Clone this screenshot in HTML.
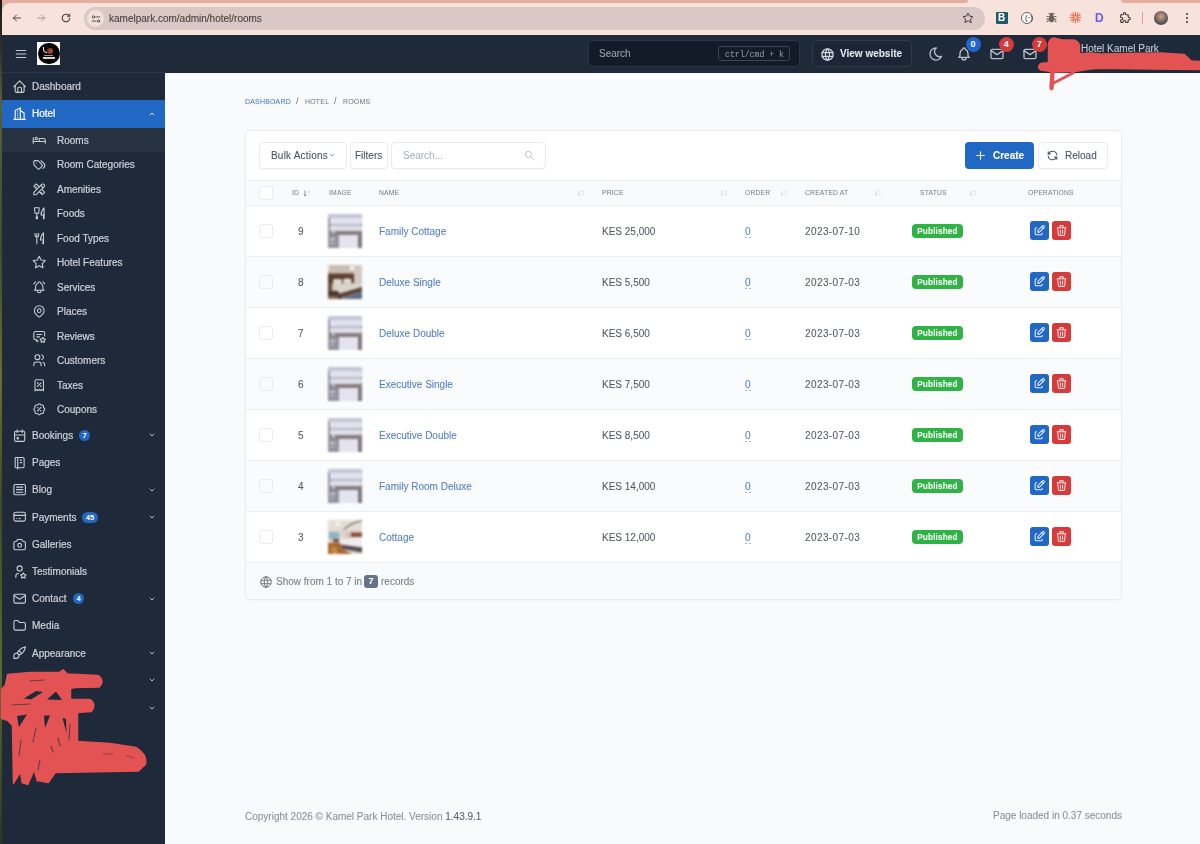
<!DOCTYPE html><html><head><meta charset="utf-8"><title>Rooms</title><style>
*{box-sizing:border-box;margin:0;padding:0}
html,body{width:1200px;height:844px;overflow:hidden}
body{position:relative;background:#f9fafc;font-family:"Liberation Sans",sans-serif;font-size:10px;color:#1d273b}
.abs{position:absolute}
.t{white-space:nowrap;-webkit-text-stroke:.08px currentColor;will-change:transform}
.sb{-webkit-text-stroke:.22px currentColor}
svg.i{position:absolute;fill:none;stroke:currentColor;stroke-linecap:round;stroke-linejoin:round;overflow:visible}
</style></head><body>
<div class="abs" style="left:0;top:0;width:2px;height:844px;background:linear-gradient(#1e1e1a 0,#30302a 6%,#56603a 12%,#3f4d2c 30%,#6a6d35 45%,#3d4a25 60%,#5a6a30 80%,#2c3520 100%)"></div>
<div class="abs" style="left:2px;top:0;width:1198px;height:35px;background:#f7e3dc"></div>
<div class="abs" style="left:2px;top:0;width:965.5px;height:2.8px;background:#e6ae9e;border-radius:0 0 3px 0"></div>
<div class="abs" style="left:1121px;top:0;width:79px;height:2.8px;background:#e6ae9e;border-radius:0 0 0 3px"></div>
<div class="abs" style="left:2px;top:2.5px;width:8px;height:8px;background:radial-gradient(circle at 8px 8px,#f7e3dc 7.5px,#e6ae9e 8px)"></div>
<div class="abs" style="left:84px;top:7px;width:901px;height:22.5px;border-radius:11.25px;background:#d9c8c5"></div>
<div class="abs" style="left:87px;top:10px;width:17px;height:17px;border-radius:50%;background:#f2e1db"></div>

<svg class="i" style="left:11px;top:12px;width:12px;height:12px;color:#4a3f3c;stroke-width:1.9" viewBox="0 0 24 24"><path d="M5 12h14"/><path d="M5 12l6 6"/><path d="M5 12l6 -6"/></svg>
<svg class="i" style="left:35px;top:12px;width:12px;height:12px;color:#a8958f;stroke-width:1.9" viewBox="0 0 24 24"><path d="M5 12h14"/><path d="M13 18l6 -6"/><path d="M13 6l6 6"/></svg>
<svg class="i" style="left:60px;top:12px;width:12px;height:12px;color:#4a3f3c;stroke-width:2.1" viewBox="0 0 24 24"><path d="M19.5 12a7.5 7.5 0 1 1 -2.2 -5.3"/><path d="M19.5 4v4.5h-4.5"/></svg>
<svg class="i" style="left:91px;top:13.5px;width:10px;height:10px;color:#4a3f3c;stroke-width:2.1" viewBox="0 0 24 24"><circle cx="6" cy="7" r="2.8"/><path d="M12 7h9"/><circle cx="18" cy="17" r="2.8"/><path d="M3 17h9"/></svg>
<div class="abs t" style="left:109.3px;top:13.40px;height:12.0px;line-height:12.0px;font-size:10px;font-weight:400;color:#4b3d39;">kamelpark.com/admin/hotel/rooms</div>
<svg class="i" style="left:962px;top:12px;width:12px;height:12px;color:#4a3f3c;stroke-width:2" viewBox="0 0 24 24"><path d="M12 17.75l-6.172 3.245l1.179 -6.873l-5 -4.867l6.9 -1l3.086 -6.253l3.086 6.253l6.9 1l-5 4.867l1.179 6.873z"/></svg>
<div class="abs" style="left:996px;top:12px;width:12px;height:12px;background:#1d5a6a;border-radius:1px"></div>
<div class="abs t" style="left:998px;top:12px;font-size:10px;line-height:12px;font-weight:700;color:#fff">B</div>
<div class="abs" style="left:1021px;top:12px;width:12px;height:12px;border-radius:50%;border:1.3px solid #6a5d59;background:#fff"></div>
<div class="abs t" style="left:1024.5px;top:11.5px;font-size:8px;line-height:12px;color:#4a3f3c">(·)</div>
<svg class="abs" style="left:1045px;top:11px;width:13px;height:13px" viewBox="0 0 24 24"><ellipse cx="12" cy="14" rx="5" ry="7" fill="#6b615d"/><circle cx="12" cy="6" r="3" fill="#6b615d"/><path d="M3 10h4M3 15h4M3 20l4 -2M21 10h-4M21 15h-4M21 20l-4 -2M7 4l2 2M17 4l-2 2" stroke="#6b615d" stroke-width="2"/></svg>
<svg class="abs" style="left:1069px;top:11px;width:13px;height:13px" viewBox="0 0 24 24"><g stroke="#e8603f" stroke-width="1.6" stroke-linecap="round"><path d="M12 2v7M12 15v7M2 12h7M15 12h7M5 5l5 5M14 14l5 5M19 5l-5 5M10 14l-5 5M7.5 3l2.5 6M14 15l2.5 6M3 7.5l6 2.5M15 14l6 2.5M16.5 3l-2.5 6M10 15l-2.5 6M21 7.5l-6 2.5M9 14l-6 2.5"/></g></svg>
<div class="abs t" style="left:1095px;top:11px;font-size:12px;line-height:14px;font-weight:700;color:#6f5ee8">D</div>
<svg class="i" style="left:1119px;top:11px;width:13px;height:13px;color:#3f3533;stroke-width:2" viewBox="0 0 24 24"><path d="M4 7h3a1 1 0 0 0 1 -1v-1a2 2 0 0 1 4 0v1a1 1 0 0 0 1 1h3a1 1 0 0 1 1 1v3a1 1 0 0 0 1 1h1a2 2 0 0 1 0 4h-1a1 1 0 0 0 -1 1v3a1 1 0 0 1 -1 1h-3a1 1 0 0 1 -1 -1v-1a2 2 0 0 0 -4 0v1a1 1 0 0 1 -1 1h-3a1 1 0 0 1 -1 -1v-3a1 1 0 0 1 1 -1h1a2 2 0 0 0 0 -4h-1a1 1 0 0 1 -1 -1v-3a1 1 0 0 1 1 -1"/></svg>
<div class="abs" style="left:1142px;top:12px;width:1px;height:12px;background:#e0a090"></div>
<div class="abs" style="left:1154px;top:11px;width:14px;height:14px;border-radius:50%;background:radial-gradient(circle at 50% 40%,#c9a58f 0,#9a7763 35%,#3d4a5a 70%,#6a7888 100%)"></div>
<div class="abs" style="left:1186px;top:13px;width:2px;height:2px;border-radius:50%;background:#3f3533;box-shadow:0 4px 0 #3f3533,0 8px 0 #3f3533"></div>
<div class="abs" style="left:2px;top:35px;width:1198px;height:37.5px;background:#1e2939"></div>
<svg class="i" style="left:14px;top:46.5px;width:14px;height:14px;color:#c5cad2;stroke-width:2" viewBox="0 0 24 24"><path d="M4 6l16 0"/><path d="M4 12l16 0"/><path d="M4 18l16 0"/></svg>
<div class="abs" style="left:37px;top:42.3px;width:23px;height:22.7px;background:#fff;overflow:hidden"><div class="abs" style="left:1px;top:0.7px;width:21.5px;height:21.5px;border-radius:50%;background:#050505"></div><div class="abs" style="left:9.5px;top:5.5px;width:6px;height:6.5px;border-radius:2.5px;background:radial-gradient(circle at 60% 55%,#c04a30 0,#7a3a24 60%,#3a2018 100%)"></div><div class="abs" style="left:6.2px;top:5.2px;width:4px;height:6px;border-left:1.6px solid #f2f2f2;border-bottom:1.4px solid #e8e8e8;border-radius:0 0 0 4px"></div><div class="abs" style="left:7px;top:12.5px;width:9px;height:.8px;background:#9a9a9a"></div><div class="abs" style="left:5.5px;top:15px;width:12px;height:2px;background:#d8d8d8"></div></div>
<div class="abs" style="left:588px;top:40px;width:212px;height:27px;background:#141b28;border:1px solid #2a3546;border-radius:4px"></div>
<div class="abs t" style="left:599px;top:48.20px;height:12.0px;line-height:12.0px;font-size:10px;font-weight:400;color:#9aa3ae;">Search</div>
<div class="abs" style="left:718px;top:46px;width:72px;height:15px;border:1px solid #3a4556;border-radius:3px"></div>
<div class="abs t" style="left:724.5px;top:46.5px;height:15px;line-height:15px;font-family:'Liberation Mono',monospace;font-size:8.2px;color:#8a939f">ctrl/cmd + k</div>
<div class="abs" style="left:812px;top:40px;width:100px;height:27px;border:1px solid #2f3a4b;border-radius:4px;background:#1c2636"></div>
<svg class="i" style="left:820px;top:46.5px;width:15px;height:15px;color:#d6dae0;stroke-width:2" viewBox="0 0 24 24"><path d="M3 12a9 9 0 1 0 18 0a9 9 0 0 0 -18 0"/><path d="M3.6 9h16.8"/><path d="M3.6 15h16.8"/><path d="M11.5 3a17 17 0 0 0 0 18"/><path d="M12.5 3a17 17 0 0 1 0 18"/></svg>
<div class="abs t" style="left:839.5px;top:48.40px;height:12.0px;line-height:12.0px;font-size:10px;font-weight:700;color:#e3e6ea;">View website</div>
<svg class="i" style="left:927.5px;top:45.5px;width:16px;height:16px;color:#b9bfc8;stroke-width:2" viewBox="0 0 24 24"><path d="M12 3c.132 0 .263 0 .393 0a7.5 7.5 0 0 0 7.92 12.446a9 9 0 1 1 -8.313 -12.454z"/></svg>
<svg class="i" style="left:955.5px;top:45.5px;width:16px;height:16px;color:#b9bfc8;stroke-width:2" viewBox="0 0 24 24"><path d="M10 5a2 2 0 1 1 4 0a7 7 0 0 1 4 6v3a4 4 0 0 0 2 3h-16a4 4 0 0 0 2 -3v-3a7 7 0 0 1 4 -6"/><path d="M9 17v1a3 3 0 0 0 6 0v-1"/></svg>
<svg class="i" style="left:988.5px;top:45.5px;width:16px;height:16px;color:#b9bfc8;stroke-width:2" viewBox="0 0 24 24"><path d="M3 7a2 2 0 0 1 2 -2h14a2 2 0 0 1 2 2v10a2 2 0 0 1 -2 2h-14a2 2 0 0 1 -2 -2v-10z"/><path d="M3 7l9 6l9 -6"/></svg>
<svg class="i" style="left:1021.5px;top:45.5px;width:16px;height:16px;color:#b9bfc8;stroke-width:2" viewBox="0 0 24 24"><path d="M3 7a2 2 0 0 1 2 -2h14a2 2 0 0 1 2 2v10a2 2 0 0 1 -2 2h-14a2 2 0 0 1 -2 -2v-10z"/><path d="M3 7l9 6l9 -6"/></svg>
<div class="abs" style="left:965.5px;top:36.7px;width:15px;height:15px;border-radius:50%;background:#2266cc;color:#fff;font-size:9px;font-weight:700;line-height:15px;text-align:center">0</div>
<div class="abs" style="left:998.7px;top:36.7px;width:15px;height:15px;border-radius:50%;background:#d63b3b;color:#fff;font-size:9px;font-weight:700;line-height:15px;text-align:center">4</div>
<div class="abs" style="left:1031.7px;top:36.7px;width:15px;height:15px;border-radius:50%;background:#d63b3b;color:#fff;font-size:9px;font-weight:700;line-height:15px;text-align:center">7</div>
<div class="abs t" style="left:1081px;top:43.20px;height:12.0px;line-height:12.0px;font-size:10px;font-weight:400;color:#c6cbd3;">Hotel Kamel Park</div>
<div class="abs" style="left:2px;top:72px;width:163px;height:772px;background:#1e2939"></div>
<div class="abs" style="left:2px;top:72px;width:163px;height:1px;background:#2b3647"></div>
<div class="abs" style="left:2px;top:100px;width:163px;height:28px;background:#2168c4"></div>
<div class="abs" style="left:2px;top:128px;width:163px;height:24px;background:#263141"></div>
<svg class="i" style="left:12px;top:79.0px;width:15.3px;height:15.3px;color:#cbd0d7;stroke-width:1.7" viewBox="0 0 24 24"><path d="M5 12l-2 0l9 -9l9 9l-2 0"/><path d="M5 12v7a2 2 0 0 0 2 2h10a2 2 0 0 0 2 -2v-7"/><path d="M9 21v-6a2 2 0 0 1 2 -2h2a2 2 0 0 1 2 2v6"/></svg><div class="abs t" style="left:32px;top:81.20px;height:12.0px;line-height:12.0px;font-size:10px;font-weight:400;color:#cbd0d7;-webkit-text-stroke:.22px currentColor">Dashboard</div>
<svg class="i" style="left:12px;top:106.2px;width:15.3px;height:15.3px;color:#ffffff;stroke-width:1.7" viewBox="0 0 24 24"><path d="M3 21l18 0"/><path d="M5 21v-14l8 -4v18"/><path d="M19 21v-10l-6 -4"/><path d="M9 9l0 .01"/><path d="M9 12l0 .01"/><path d="M9 15l0 .01"/><path d="M9 18l0 .01"/></svg><div class="abs t" style="left:32px;top:108.40px;height:12.0px;line-height:12.0px;font-size:10px;font-weight:400;color:#ffffff;-webkit-text-stroke:.22px currentColor">Hotel</div><svg class="i" style="left:148px;top:109.8px;width:8px;height:8px;color:#ffffff;stroke-width:2.6" viewBox="0 0 24 24"><path d="M6 15l6 -6l6 6"/></svg>
<svg class="i" style="left:32px;top:132.75px;width:14.5px;height:14.5px;color:#cbd0d7;stroke-width:1.75" viewBox="0 0 24 24"><path d="M7 9m-2 0a2 2 0 1 0 4 0a2 2 0 1 0 -4 0"/><path d="M22 17v-3h-20"/><path d="M2 8v9"/><path d="M12 14h10v-2a3 3 0 0 0 -3 -3h-7v5z"/></svg>
<div class="abs t" style="left:56.5px;top:134.60px;height:12.0px;line-height:12.0px;font-size:10px;font-weight:400;color:#cbd0d7;-webkit-text-stroke:.22px currentColor">Rooms</div>
<svg class="i" style="left:32px;top:157.25px;width:14.5px;height:14.5px;color:#cbd0d7;stroke-width:1.75" viewBox="0 0 24 24"><path d="M3 8v4.172a2 2 0 0 0 .586 1.414l5.71 5.71a2.41 2.41 0 0 0 3.408 0l3.592 -3.592a2.41 2.41 0 0 0 0 -3.408l-5.71 -5.71a2 2 0 0 0 -1.414 -.586h-4.172a2 2 0 0 0 -2 2z"/><path d="M18 19l1.592 -1.592a4.82 4.82 0 0 0 0 -6.816l-4.592 -4.592"/><path d="M7 10h-.01"/></svg>
<div class="abs t" style="left:56.5px;top:159.10px;height:12.0px;line-height:12.0px;font-size:10px;font-weight:400;color:#cbd0d7;-webkit-text-stroke:.22px currentColor">Room Categories</div>
<svg class="i" style="left:32px;top:181.75px;width:14.5px;height:14.5px;color:#cbd0d7;stroke-width:1.75" viewBox="0 0 24 24"><path d="M3 21h4l13 -13a1.5 1.5 0 0 0 -4 -4l-13 13v4"/><path d="M14.5 5.5l4 4"/><path d="M12 8l-5 -5l-4 4l5 5"/><path d="M7 8l-1.5 1.5"/><path d="M16 12l5 5l-4 4l-5 -5"/><path d="M16 17l-1.5 1.5"/></svg>
<div class="abs t" style="left:56.5px;top:183.60px;height:12.0px;line-height:12.0px;font-size:10px;font-weight:400;color:#cbd0d7;-webkit-text-stroke:.22px currentColor">Amenities</div>
<svg class="i" style="left:32px;top:206.25px;width:14.5px;height:14.5px;color:#cbd0d7;stroke-width:1.75" viewBox="0 0 24 24"><path d="M4 3h8l-1 9h-6z"/><path d="M7 18h2v3h-2z"/><path d="M20 3v12h-5c-.023 -3.681 .184 -7.406 5 -12z"/><path d="M20 15v6h-1v-6"/><path d="M8 12l0 6"/></svg>
<div class="abs t" style="left:56.5px;top:208.10px;height:12.0px;line-height:12.0px;font-size:10px;font-weight:400;color:#cbd0d7;-webkit-text-stroke:.22px currentColor">Foods</div>
<svg class="i" style="left:32px;top:230.75px;width:14.5px;height:14.5px;color:#cbd0d7;stroke-width:1.75" viewBox="0 0 24 24"><path d="M19 3v12h-5c-.023 -3.681 .184 -7.406 5 -12zm0 12v6h-1v-3m-10 -14v17m-3 -17v3a3 3 0 1 0 6 0v-3"/></svg>
<div class="abs t" style="left:56.5px;top:232.60px;height:12.0px;line-height:12.0px;font-size:10px;font-weight:400;color:#cbd0d7;-webkit-text-stroke:.22px currentColor">Food Types</div>
<svg class="i" style="left:32px;top:255.25px;width:14.5px;height:14.5px;color:#cbd0d7;stroke-width:1.75" viewBox="0 0 24 24"><path d="M12 17.75l-6.172 3.245l1.179 -6.873l-5 -4.867l6.9 -1l3.086 -6.253l3.086 6.253l6.9 1l-5 4.867l1.179 6.873z"/></svg>
<div class="abs t" style="left:56.5px;top:257.10px;height:12.0px;line-height:12.0px;font-size:10px;font-weight:400;color:#cbd0d7;-webkit-text-stroke:.22px currentColor">Hotel Features</div>
<svg class="i" style="left:32px;top:279.75px;width:14.5px;height:14.5px;color:#cbd0d7;stroke-width:1.75" viewBox="0 0 24 24"><path d="M10 5a2 2 0 0 1 4 0a7 7 0 0 1 4 6v3a4 4 0 0 0 2 3h-16a4 4 0 0 0 2 -3v-3a7 7 0 0 1 4 -6"/><path d="M9 17v1a3 3 0 0 0 6 0v-1"/><path d="M21 6.727a11.05 11.05 0 0 0 -2.794 -3.727"/><path d="M3 6.727a11.06 11.06 0 0 1 2.792 -3.727"/></svg>
<div class="abs t" style="left:56.5px;top:281.60px;height:12.0px;line-height:12.0px;font-size:10px;font-weight:400;color:#cbd0d7;-webkit-text-stroke:.22px currentColor">Services</div>
<svg class="i" style="left:32px;top:304.25px;width:14.5px;height:14.5px;color:#cbd0d7;stroke-width:1.75" viewBox="0 0 24 24"><path d="M9 11a3 3 0 1 0 6 0a3 3 0 0 0 -6 0"/><path d="M17.657 16.657l-4.243 4.243a2 2 0 0 1 -2.827 0l-4.244 -4.243a8 8 0 1 1 11.314 0z"/></svg>
<div class="abs t" style="left:56.5px;top:306.10px;height:12.0px;line-height:12.0px;font-size:10px;font-weight:400;color:#cbd0d7;-webkit-text-stroke:.22px currentColor">Places</div>
<svg class="i" style="left:32px;top:328.75px;width:14.5px;height:14.5px;color:#cbd0d7;stroke-width:1.75" viewBox="0 0 24 24"><path d="M8 9h8"/><path d="M8 13h4.5"/><path d="M10.325 19.605l-2.325 1.395v-3h-2a3 3 0 0 1 -3 -3v-8a3 3 0 0 1 3 -3h12a3 3 0 0 1 3 3v4.5"/><path d="M17.8 20.817l-2.172 1.138a.392 .392 0 0 1 -.568 -.41l.415 -2.411l-1.757 -1.707a.389 .389 0 0 1 .217 -.665l2.428 -.352l1.086 -2.193a.392 .392 0 0 1 .702 0l1.086 2.193l2.428 .352a.39 .39 0 0 1 .217 .665l-1.757 1.707l.414 2.41a.39 .39 0 0 1 -.567 .411l-2.172 -1.138z"/></svg>
<div class="abs t" style="left:56.5px;top:330.60px;height:12.0px;line-height:12.0px;font-size:10px;font-weight:400;color:#cbd0d7;-webkit-text-stroke:.22px currentColor">Reviews</div>
<svg class="i" style="left:32px;top:353.25px;width:14.5px;height:14.5px;color:#cbd0d7;stroke-width:1.75" viewBox="0 0 24 24"><path d="M9 7m-4 0a4 4 0 1 0 8 0a4 4 0 1 0 -8 0"/><path d="M3 21v-2a4 4 0 0 1 4 -4h4a4 4 0 0 1 4 4v2"/><path d="M16 3.13a4 4 0 0 1 0 7.75"/><path d="M21 21v-2a4 4 0 0 0 -3 -3.85"/></svg>
<div class="abs t" style="left:56.5px;top:355.10px;height:12.0px;line-height:12.0px;font-size:10px;font-weight:400;color:#cbd0d7;-webkit-text-stroke:.22px currentColor">Customers</div>
<svg class="i" style="left:32px;top:377.75px;width:14.5px;height:14.5px;color:#cbd0d7;stroke-width:1.75" viewBox="0 0 24 24"><path d="M9 14l6 -6"/><circle cx="9.5" cy="8.5" r=".5"/><circle cx="14.5" cy="13.5" r=".5"/><path d="M5 21v-16a2 2 0 0 1 2 -2h10a2 2 0 0 1 2 2v16l-3 -2l-2 2l-2 -2l-2 2l-2 -2l-3 2"/></svg>
<div class="abs t" style="left:56.5px;top:379.60px;height:12.0px;line-height:12.0px;font-size:10px;font-weight:400;color:#cbd0d7;-webkit-text-stroke:.22px currentColor">Taxes</div>
<svg class="i" style="left:32px;top:402.25px;width:14.5px;height:14.5px;color:#cbd0d7;stroke-width:1.75" viewBox="0 0 24 24"><path d="M9 15l6 -6"/><circle cx="9.5" cy="9.5" r=".5"/><circle cx="14.5" cy="14.5" r=".5"/><path d="M5 7.2a2.2 2.2 0 0 1 2.2 -2.2h1a2.2 2.2 0 0 0 1.55 -.64l.7 -.7a2.2 2.2 0 0 1 3.12 0l.7 .7c.412 .41 .97 .64 1.55 .64h1a2.2 2.2 0 0 1 2.2 2.2v1c0 .58 .23 1.138 .64 1.55l.7 .7a2.2 2.2 0 0 1 0 3.12l-.7 .7a2.2 2.2 0 0 0 -.64 1.55v1a2.2 2.2 0 0 1 -2.2 2.2h-1a2.2 2.2 0 0 0 -1.55 .64l-.7 .7a2.2 2.2 0 0 1 -3.12 0l-.7 -.7a2.2 2.2 0 0 0 -1.55 -.64h-1a2.2 2.2 0 0 1 -2.2 -2.2v-1a2.2 2.2 0 0 0 -.64 -1.55l-.7 -.7a2.2 2.2 0 0 1 0 -3.12l.7 -.7a2.2 2.2 0 0 0 .64 -1.55v-1"/></svg>
<div class="abs t" style="left:56.5px;top:404.10px;height:12.0px;line-height:12.0px;font-size:10px;font-weight:400;color:#cbd0d7;-webkit-text-stroke:.22px currentColor">Coupons</div>
<svg class="i" style="left:12px;top:427.79999999999995px;width:15.3px;height:15.3px;color:#cbd0d7;stroke-width:1.7" viewBox="0 0 24 24"><path d="M4 7a2 2 0 0 1 2 -2h12a2 2 0 0 1 2 2v12a2 2 0 0 1 -2 2h-12a2 2 0 0 1 -2 -2z"/><path d="M16 3l0 4"/><path d="M8 3l0 4"/><path d="M4 11l16 0"/><path d="M8 15h2v2h-2z"/></svg><div class="abs t" style="left:32px;top:430.00px;height:12.0px;line-height:12.0px;font-size:10px;font-weight:400;color:#cbd0d7;-webkit-text-stroke:.22px currentColor">Bookings</div><svg class="i" style="left:148px;top:431.4px;width:8px;height:8px;color:#cbd0d7;stroke-width:2.6" viewBox="0 0 24 24"><path d="M6 9l6 6l6 -6"/></svg><div class="abs" style="left:79px;top:429.9px;width:11px;height:11px;border-radius:6px;background:#2168c4;color:#fff;font-size:7.5px;font-weight:700;line-height:11px;text-align:center">7</div>
<svg class="i" style="left:12px;top:454.99999999999994px;width:15.3px;height:15.3px;color:#cbd0d7;stroke-width:1.7" viewBox="0 0 24 24"><path d="M6 4h11a2 2 0 0 1 2 2v12a2 2 0 0 1 -2 2h-11a1 1 0 0 1 -1 -1v-14a1 1 0 0 1 1 -1m3 0v18"/><path d="M13 8l2 0"/><path d="M13 12l2 0"/></svg><div class="abs t" style="left:32px;top:457.20px;height:12.0px;line-height:12.0px;font-size:10px;font-weight:400;color:#cbd0d7;-webkit-text-stroke:.22px currentColor">Pages</div>
<svg class="i" style="left:12px;top:482.19999999999993px;width:15.3px;height:15.3px;color:#cbd0d7;stroke-width:1.7" viewBox="0 0 24 24"><path d="M3 6a2 2 0 0 1 2 -2h14a2 2 0 0 1 2 2v12a2 2 0 0 1 -2 2h-14a2 2 0 0 1 -2 -2z"/><path d="M7 8h10"/><path d="M7 12h10"/><path d="M7 16h10"/></svg><div class="abs t" style="left:32px;top:484.40px;height:12.0px;line-height:12.0px;font-size:10px;font-weight:400;color:#cbd0d7;-webkit-text-stroke:.22px currentColor">Blog</div><svg class="i" style="left:148px;top:485.79999999999995px;width:8px;height:8px;color:#cbd0d7;stroke-width:2.6" viewBox="0 0 24 24"><path d="M6 9l6 6l6 -6"/></svg>
<svg class="i" style="left:12px;top:509.4px;width:15.3px;height:15.3px;color:#cbd0d7;stroke-width:1.7" viewBox="0 0 24 24"><path d="M3 8a3 3 0 0 1 3 -3h12a3 3 0 0 1 3 3v8a3 3 0 0 1 -3 3h-12a3 3 0 0 1 -3 -3z"/><path d="M3 10l18 0"/><path d="M7 15l.01 0"/><path d="M11 15l2 0"/></svg><div class="abs t" style="left:32px;top:511.60px;height:12.0px;line-height:12.0px;font-size:10px;font-weight:400;color:#cbd0d7;-webkit-text-stroke:.22px currentColor">Payments</div><svg class="i" style="left:148px;top:513.0px;width:8px;height:8px;color:#cbd0d7;stroke-width:2.6" viewBox="0 0 24 24"><path d="M6 9l6 6l6 -6"/></svg><div class="abs" style="left:82px;top:511.5px;width:16px;height:11px;border-radius:6px;background:#2168c4;color:#fff;font-size:7.5px;font-weight:700;line-height:11px;text-align:center">45</div>
<svg class="i" style="left:12px;top:536.5999999999999px;width:15.3px;height:15.3px;color:#cbd0d7;stroke-width:1.7" viewBox="0 0 24 24"><path d="M5 7h1a2 2 0 0 0 2 -2a1 1 0 0 1 1 -1h6a1 1 0 0 1 1 1a2 2 0 0 0 2 2h1a2 2 0 0 1 2 2v9a2 2 0 0 1 -2 2h-14a2 2 0 0 1 -2 -2v-9a2 2 0 0 1 2 -2"/><path d="M9 13a3 3 0 1 0 6 0a3 3 0 0 0 -6 0"/></svg><div class="abs t" style="left:32px;top:538.80px;height:12.0px;line-height:12.0px;font-size:10px;font-weight:400;color:#cbd0d7;-webkit-text-stroke:.22px currentColor">Galleries</div>
<svg class="i" style="left:12px;top:563.8px;width:15.3px;height:15.3px;color:#cbd0d7;stroke-width:1.7" viewBox="0 0 24 24"><path d="M8 7a4 4 0 1 0 8 0a4 4 0 0 0 -8 0"/><path d="M6 21v-2a4 4 0 0 1 4 -4h.5"/><path d="M17.8 20.817l-2.172 1.138a.392 .392 0 0 1 -.568 -.41l.415 -2.411l-1.757 -1.707a.389 .389 0 0 1 .217 -.665l2.428 -.352l1.086 -2.193a.392 .392 0 0 1 .702 0l1.086 2.193l2.428 .352a.39 .39 0 0 1 .217 .665l-1.757 1.707l.414 2.41a.39 .39 0 0 1 -.567 .411l-2.172 -1.138z"/></svg><div class="abs t" style="left:32px;top:566.00px;height:12.0px;line-height:12.0px;font-size:10px;font-weight:400;color:#cbd0d7;-webkit-text-stroke:.22px currentColor">Testimonials</div>
<svg class="i" style="left:12px;top:590.9999999999999px;width:15.3px;height:15.3px;color:#cbd0d7;stroke-width:1.7" viewBox="0 0 24 24"><path d="M3 7a2 2 0 0 1 2 -2h14a2 2 0 0 1 2 2v10a2 2 0 0 1 -2 2h-14a2 2 0 0 1 -2 -2v-10z"/><path d="M3 7l9 6l9 -6"/></svg><div class="abs t" style="left:32px;top:593.20px;height:12.0px;line-height:12.0px;font-size:10px;font-weight:400;color:#cbd0d7;-webkit-text-stroke:.22px currentColor">Contact</div><svg class="i" style="left:148px;top:594.5999999999999px;width:8px;height:8px;color:#cbd0d7;stroke-width:2.6" viewBox="0 0 24 24"><path d="M6 9l6 6l6 -6"/></svg><div class="abs" style="left:73px;top:593.0999999999999px;width:11px;height:11px;border-radius:6px;background:#2168c4;color:#fff;font-size:7.5px;font-weight:700;line-height:11px;text-align:center">4</div>
<svg class="i" style="left:12px;top:618.1999999999999px;width:15.3px;height:15.3px;color:#cbd0d7;stroke-width:1.7" viewBox="0 0 24 24"><path d="M5 4h4l3 3h7a2 2 0 0 1 2 2v8a2 2 0 0 1 -2 2h-14a2 2 0 0 1 -2 -2v-11a2 2 0 0 1 2 -2"/></svg><div class="abs t" style="left:32px;top:620.40px;height:12.0px;line-height:12.0px;font-size:10px;font-weight:400;color:#cbd0d7;-webkit-text-stroke:.22px currentColor">Media</div>
<svg class="i" style="left:12px;top:645.4px;width:15.3px;height:15.3px;color:#cbd0d7;stroke-width:1.7" viewBox="0 0 24 24"><path d="M3 21v-4a4 4 0 1 1 4 4h-4"/><path d="M21 3a16 16 0 0 0 -12.8 10.2"/><path d="M21 3a16 16 0 0 1 -10.2 12.8"/><path d="M10.6 9a9 9 0 0 1 4.4 4.4"/></svg><div class="abs t" style="left:32px;top:647.60px;height:12.0px;line-height:12.0px;font-size:10px;font-weight:400;color:#cbd0d7;-webkit-text-stroke:.22px currentColor">Appearance</div><svg class="i" style="left:148px;top:649.0px;width:8px;height:8px;color:#cbd0d7;stroke-width:2.6" viewBox="0 0 24 24"><path d="M6 9l6 6l6 -6"/></svg>
<svg class="i" style="left:148px;top:676.4px;width:8px;height:8px;color:#cbd0d7;stroke-width:2.6" viewBox="0 0 24 24"><path d="M6 9l6 6l6 -6"/></svg>
<svg class="i" style="left:148px;top:703.6px;width:8px;height:8px;color:#cbd0d7;stroke-width:2.6" viewBox="0 0 24 24"><path d="M6 9l6 6l6 -6"/></svg>
<div class="abs t" style="left:244.7px;top:98.10px;height:8.4px;line-height:8.4px;font-size:7px;font-weight:400;color:#3f73c0;letter-spacing:.025em;-webkit-text-stroke:0">DASHBOARD</div>
<div class="abs t" style="left:296.3px;top:96.40px;height:10.8px;line-height:10.8px;font-size:9px;font-weight:400;color:#6b7480;-webkit-text-stroke:0">/</div>
<div class="abs t" style="left:304.8px;top:98.10px;height:8.4px;line-height:8.4px;font-size:7px;font-weight:400;color:#6b7480;letter-spacing:.025em;-webkit-text-stroke:0">HOTEL</div>
<div class="abs t" style="left:333.8px;top:96.40px;height:10.8px;line-height:10.8px;font-size:9px;font-weight:400;color:#6b7480;-webkit-text-stroke:0">/</div>
<div class="abs t" style="left:342.7px;top:98.10px;height:8.4px;line-height:8.4px;font-size:7px;font-weight:400;color:#6b7480;letter-spacing:.025em;-webkit-text-stroke:0">ROOMS</div>
<div class="abs" style="left:245px;top:130px;width:877px;height:470px;background:#fff;border:1px solid #eaecef;border-radius:5px;box-shadow:0 1px 2px rgba(20,30,50,.03)"></div>
<div class="abs" style="left:259px;top:142px;width:88px;height:27px;border:1px solid #e9ebef;border-radius:4px;background:#fff;box-shadow:0 1px 1px rgba(30,40,60,.03);"></div>
<div class="abs t" style="left:270.7px;top:150.1px;height:12px;line-height:12px;font-size:10px;color:#4b5260;letter-spacing:.2px">Bulk Actions</div>
<svg class="i" style="left:328.8px;top:152.3px;width:6.5px;height:6.5px;color:#4b5260;stroke-width:2.4" viewBox="0 0 24 24"><path d="M6 9l6 6l6 -6"/></svg>
<div class="abs" style="left:350px;top:142px;width:37.5px;height:27px;border:1px solid #e9ebef;border-radius:4px;background:#fff;box-shadow:0 1px 1px rgba(30,40,60,.03);"></div>
<div class="abs t" style="left:355.3px;top:150.1px;height:12px;line-height:12px;font-size:10px;color:#4b5260;">Filters</div>
<div class="abs" style="left:391px;top:142px;width:155px;height:27px;border:1px solid #e9ebef;border-radius:4px;background:#fff;box-shadow:0 1px 1px rgba(30,40,60,.03);"></div>
<div class="abs t" style="left:402.5px;top:150.1px;height:12px;line-height:12px;font-size:10px;color:#adb2b9;">Search...</div>
<svg class="i" style="left:523.5px;top:149.5px;width:10.5px;height:10.5px;color:#b3b8be;stroke-width:2" viewBox="0 0 24 24"><path d="M3 10a7 7 0 1 0 14 0a7 7 0 1 0 -14 0"/><path d="M21 21l-6 -6"/></svg>
<div class="abs" style="left:965px;top:142px;width:69px;height:27px;border-radius:4px;background:#2168c4"></div>
<svg class="i" style="left:973.5px;top:149px;width:13px;height:13px;color:#fff;stroke-width:2" viewBox="0 0 24 24"><path d="M12 5l0 14"/><path d="M5 12l14 0"/></svg>
<div class="abs t" style="left:992.7px;top:150.1px;height:12px;line-height:12px;font-size:10px;color:#fff;font-weight:700">Create</div>
<div class="abs" style="left:1037.5px;top:142px;width:70.0px;height:27px;border:1px solid #e9ebef;border-radius:4px;background:#fff;box-shadow:0 1px 1px rgba(30,40,60,.03);"></div>
<svg class="i" style="left:1045.5px;top:148.5px;width:13px;height:13px;color:#4b5260;stroke-width:1.9" viewBox="0 0 24 24"><path d="M20 11a8.1 8.1 0 0 0 -15.5 -2m-.5 -4v4h4"/><path d="M4 13a8.1 8.1 0 0 0 15.5 2m.5 4v-4h-4"/></svg>
<div class="abs t" style="left:1065.4px;top:150.1px;height:12px;line-height:12px;font-size:10px;color:#4b5260;">Reload</div>
<div class="abs" style="left:246px;top:180px;width:875px;height:1px;background:#eceef1"></div>
<div class="abs" style="left:246px;top:181px;width:875px;height:24px;background:#f9fafb"></div>
<div class="abs" style="left:259px;top:186px;width:13.5px;height:13.5px;border:1px solid #e9ebee;border-radius:3px;background:#fff"></div>
<div class="abs t" style="left:292px;top:187.6px;height:10px;line-height:10px;font-size:6.8px;color:#737b86;letter-spacing:.025em;-webkit-text-stroke:0">ID</div>
<svg class="abs" style="left:302.6px;top:189.6px;width:8px;height:7px" viewBox="0 0 8 7"><path d="M2 .6v5.4M.9 4.8L2 6L3.1 4.8" stroke="#6a727c" stroke-width="0.75" fill="none"/><path d="M5.9 6V.6M4.8 1.8L5.9 .6L7 1.8" stroke="#d9dde2" stroke-width="0.75" fill="none"/></svg>
<div class="abs t" style="left:328.5px;top:187.6px;height:10px;line-height:10px;font-size:6.8px;color:#737b86;letter-spacing:.025em;-webkit-text-stroke:0">IMAGE</div>
<div class="abs t" style="left:379px;top:187.6px;height:10px;line-height:10px;font-size:6.8px;color:#737b86;letter-spacing:.025em;-webkit-text-stroke:0">NAME</div>
<svg class="abs" style="left:577px;top:189.6px;width:8px;height:7px" viewBox="0 0 8 7"><path d="M2 .6v5.4M.9 4.8L2 6L3.1 4.8" stroke="#cdd2d8" stroke-width="0.75" fill="none"/><path d="M5.9 6V.6M4.8 1.8L5.9 .6L7 1.8" stroke="#d9dde2" stroke-width="0.75" fill="none"/></svg>
<div class="abs t" style="left:601.8px;top:187.6px;height:10px;line-height:10px;font-size:6.8px;color:#737b86;letter-spacing:.025em;-webkit-text-stroke:0">PRICE</div>
<svg class="abs" style="left:720px;top:189.6px;width:8px;height:7px" viewBox="0 0 8 7"><path d="M2 .6v5.4M.9 4.8L2 6L3.1 4.8" stroke="#cdd2d8" stroke-width="0.75" fill="none"/><path d="M5.9 6V.6M4.8 1.8L5.9 .6L7 1.8" stroke="#d9dde2" stroke-width="0.75" fill="none"/></svg>
<div class="abs t" style="left:744.8px;top:187.6px;height:10px;line-height:10px;font-size:6.8px;color:#737b86;letter-spacing:.025em;-webkit-text-stroke:0">ORDER</div>
<svg class="abs" style="left:780px;top:189.6px;width:8px;height:7px" viewBox="0 0 8 7"><path d="M2 .6v5.4M.9 4.8L2 6L3.1 4.8" stroke="#cdd2d8" stroke-width="0.75" fill="none"/><path d="M5.9 6V.6M4.8 1.8L5.9 .6L7 1.8" stroke="#d9dde2" stroke-width="0.75" fill="none"/></svg>
<div class="abs t" style="left:805px;top:187.6px;height:10px;line-height:10px;font-size:6.8px;color:#737b86;letter-spacing:.025em;-webkit-text-stroke:0">CREATED AT</div>
<svg class="abs" style="left:874px;top:189.6px;width:8px;height:7px" viewBox="0 0 8 7"><path d="M2 .6v5.4M.9 4.8L2 6L3.1 4.8" stroke="#cdd2d8" stroke-width="0.75" fill="none"/><path d="M5.9 6V.6M4.8 1.8L5.9 .6L7 1.8" stroke="#d9dde2" stroke-width="0.75" fill="none"/></svg>
<div class="abs t" style="left:919.8px;top:187.6px;height:10px;line-height:10px;font-size:6.8px;color:#737b86;letter-spacing:.025em;-webkit-text-stroke:0">STATUS</div>
<svg class="abs" style="left:968.5px;top:189.6px;width:8px;height:7px" viewBox="0 0 8 7"><path d="M2 .6v5.4M.9 4.8L2 6L3.1 4.8" stroke="#cdd2d8" stroke-width="0.75" fill="none"/><path d="M5.9 6V.6M4.8 1.8L5.9 .6L7 1.8" stroke="#d9dde2" stroke-width="0.75" fill="none"/></svg>
<div class="abs t" style="left:1028.3px;top:187.6px;height:10px;line-height:10px;font-size:6.8px;color:#737b86;letter-spacing:.025em;-webkit-text-stroke:0">OPERATIONS</div>
<div class="abs" style="left:246px;top:205px;width:875px;height:1px;background:#eceef1"></div>
<div class="abs" style="left:246px;top:206px;width:875px;height:50px;background:#fff"></div>
<div class="abs" style="left:259px;top:224.0px;width:13.5px;height:13.5px;border:1px solid #e9ebee;border-radius:3px;background:#fff"></div>
<div class="abs t" style="left:297.5px;top:226.2px;height:12px;line-height:12px;font-size:10px;color:#545a62;">9</div>
<div class="abs" style="left:328.3px;top:213.8px;width:34px;height:34px;filter:blur(.8px)"><svg width="34" height="34" viewBox="0 0 34 34" style="display:block"><rect width="34" height="34" fill="#9a97a5"/><rect width="34" height="6" fill="#c4c4d6"/><rect x="1" y="4" width="33" height="6.5" rx="3" fill="#e2e2ee"/><rect y="10.5" width="34" height="1.2" fill="#aaa6b3"/><rect x="1" y="11.5" width="33" height="5.5" rx="2.5" fill="#dedeea"/><rect y="17" width="34" height="4.5" fill="#877c7d"/><rect x="4" y="17.5" width="3" height="2" fill="#d4d4e0"/><rect x="0" y="4" width="2" height="17" fill="#9894a3"/><rect x="0" y="21.5" width="11" height="12.5" fill="#95929f"/><rect x="2" y="24" width="5" height="2" fill="#c8c6d0"/><rect x="2" y="28" width="4" height="1.5" fill="#bebcc6"/><rect x="11" y="21" width="19" height="13" fill="#e4e3ee"/><rect x="30" y="21" width="4" height="13" fill="#7d7882"/></svg></div>
<div class="abs t" style="left:379px;top:226.2px;height:12px;line-height:12px;font-size:10px;color:#5580c4;">Family Cottage</div>
<div class="abs t" style="left:601.5px;top:226.2px;height:12px;line-height:12px;font-size:10px;color:#545a62;">KES 25,000</div>
<div class="abs t" style="left:745.2px;top:225.6px;height:12px;line-height:12px;font-size:10px;color:#5580c4">0</div>
<div class="abs" style="left:744.8px;top:236.6px;width:6.5px;height:1.2px;background:repeating-linear-gradient(90deg,#a3b8d8 0 2.2px,transparent 2.2px 4.2px)"></div>
<div class="abs t" style="left:805px;top:226.2px;height:12px;line-height:12px;font-size:10px;color:#545a62;letter-spacing:.4px">2023-07-10</div>
<div class="abs t" style="left:912px;top:224.0px;width:51px;height:13.5px;line-height:16px;border-radius:4px;background:#2fb344;color:#f4fff5;font-size:8.2px;letter-spacing:.15px;font-weight:700;text-align:center">Published</div>
<div class="abs" style="left:1030px;top:221.4px;width:18.6px;height:18.6px;border-radius:3px;background:#2168c4"></div>
<svg class="i" style="left:1032.8px;top:224.3px;width:13px;height:13px;color:#e8f0fb;stroke-width:1.9" viewBox="0 0 24 24"><path d="M7 7h-1a2 2 0 0 0 -2 2v9a2 2 0 0 0 2 2h9a2 2 0 0 0 2 -2v-1"/><path d="M20.385 6.585a2.1 2.1 0 0 0 -2.97 -2.97l-8.415 8.385v3h3l8.415 -8.415z"/><path d="M16 5l3 3"/></svg>
<div class="abs" style="left:1052px;top:221.4px;width:18.6px;height:18.6px;border-radius:3px;background:#d63b3b"></div>
<svg class="i" style="left:1054.8px;top:224.3px;width:13px;height:13px;color:#fbe3e3;stroke-width:1.9" viewBox="0 0 24 24"><path d="M4 7l16 0"/><path d="M10 11l0 6"/><path d="M14 11l0 6"/><path d="M5 7l1 12a2 2 0 0 0 2 2h8a2 2 0 0 0 2 -2l1 -12"/><path d="M9 7v-3a1 1 0 0 1 1 -1h4a1 1 0 0 1 1 1v3"/></svg>
<div class="abs" style="left:246px;top:256px;width:875px;height:1px;background:#eceef1"></div>
<div class="abs" style="left:246px;top:257px;width:875px;height:50px;background:#fafbfc"></div>
<div class="abs" style="left:259px;top:275.0px;width:13.5px;height:13.5px;border:1px solid #e9ebee;border-radius:3px;background:#fafbfc"></div>
<div class="abs t" style="left:297.5px;top:277.2px;height:12px;line-height:12px;font-size:10px;color:#545a62;">8</div>
<div class="abs" style="left:328.3px;top:264.8px;width:34px;height:34px;filter:blur(.8px)"><svg width="34" height="34" viewBox="0 0 34 34" style="display:block"><rect width="34" height="34" fill="#c9beb5"/><rect x="26" y="0" width="8" height="22" fill="#d2c9c1"/><circle cx="24" cy="3" r="2.5" fill="#f4efe8"/><circle cx="0" cy="3" r="2" fill="#e9e2da"/><rect x="0" y="8.5" width="26" height="10" fill="#5e3f33"/><rect x="0" y="18" width="4" height="8" fill="#6a4a3c"/><path d="M4 19 L33 18 L34 24 L12 32 Z" fill="#d9d5ca"/><rect x="5" y="14" width="9" height="5" rx="2" fill="#dedad2"/><rect x="15" y="13.5" width="8.5" height="5" rx="2" fill="#e2ded6"/><path d="M10 29 L34 22 L34 26 L14 33 Z" fill="#5a4036"/><path d="M16 33 L34 26 L34 34 L14 34 Z" fill="#5d6c84"/><path d="M0 26 L10 26 L14 34 L0 34 Z" fill="#4b3a33"/><rect x="0" y="31" width="10" height="3" fill="#8a6a55"/></svg></div>
<div class="abs t" style="left:379px;top:277.2px;height:12px;line-height:12px;font-size:10px;color:#5580c4;">Deluxe Single</div>
<div class="abs t" style="left:601.5px;top:277.2px;height:12px;line-height:12px;font-size:10px;color:#545a62;">KES 5,500</div>
<div class="abs t" style="left:745.2px;top:276.6px;height:12px;line-height:12px;font-size:10px;color:#5580c4">0</div>
<div class="abs" style="left:744.8px;top:287.6px;width:6.5px;height:1.2px;background:repeating-linear-gradient(90deg,#a3b8d8 0 2.2px,transparent 2.2px 4.2px)"></div>
<div class="abs t" style="left:805px;top:277.2px;height:12px;line-height:12px;font-size:10px;color:#545a62;letter-spacing:.4px">2023-07-03</div>
<div class="abs t" style="left:912px;top:275.0px;width:51px;height:13.5px;line-height:16px;border-radius:4px;background:#2fb344;color:#f4fff5;font-size:8.2px;letter-spacing:.15px;font-weight:700;text-align:center">Published</div>
<div class="abs" style="left:1030px;top:272.4px;width:18.6px;height:18.6px;border-radius:3px;background:#2168c4"></div>
<svg class="i" style="left:1032.8px;top:275.3px;width:13px;height:13px;color:#e8f0fb;stroke-width:1.9" viewBox="0 0 24 24"><path d="M7 7h-1a2 2 0 0 0 -2 2v9a2 2 0 0 0 2 2h9a2 2 0 0 0 2 -2v-1"/><path d="M20.385 6.585a2.1 2.1 0 0 0 -2.97 -2.97l-8.415 8.385v3h3l8.415 -8.415z"/><path d="M16 5l3 3"/></svg>
<div class="abs" style="left:1052px;top:272.4px;width:18.6px;height:18.6px;border-radius:3px;background:#d63b3b"></div>
<svg class="i" style="left:1054.8px;top:275.3px;width:13px;height:13px;color:#fbe3e3;stroke-width:1.9" viewBox="0 0 24 24"><path d="M4 7l16 0"/><path d="M10 11l0 6"/><path d="M14 11l0 6"/><path d="M5 7l1 12a2 2 0 0 0 2 2h8a2 2 0 0 0 2 -2l1 -12"/><path d="M9 7v-3a1 1 0 0 1 1 -1h4a1 1 0 0 1 1 1v3"/></svg>
<div class="abs" style="left:246px;top:307px;width:875px;height:1px;background:#eceef1"></div>
<div class="abs" style="left:246px;top:308px;width:875px;height:50px;background:#fff"></div>
<div class="abs" style="left:259px;top:326.0px;width:13.5px;height:13.5px;border:1px solid #e9ebee;border-radius:3px;background:#fff"></div>
<div class="abs t" style="left:297.5px;top:328.2px;height:12px;line-height:12px;font-size:10px;color:#545a62;">7</div>
<div class="abs" style="left:328.3px;top:315.8px;width:34px;height:34px;filter:blur(.8px)"><svg width="34" height="34" viewBox="0 0 34 34" style="display:block"><rect width="34" height="34" fill="#9a97a5"/><rect width="34" height="6" fill="#c4c4d6"/><rect x="1" y="4" width="33" height="6.5" rx="3" fill="#e2e2ee"/><rect y="10.5" width="34" height="1.2" fill="#aaa6b3"/><rect x="1" y="11.5" width="33" height="5.5" rx="2.5" fill="#dedeea"/><rect y="17" width="34" height="4.5" fill="#877c7d"/><rect x="4" y="17.5" width="3" height="2" fill="#d4d4e0"/><rect x="0" y="4" width="2" height="17" fill="#9894a3"/><rect x="0" y="21.5" width="11" height="12.5" fill="#95929f"/><rect x="2" y="24" width="5" height="2" fill="#c8c6d0"/><rect x="2" y="28" width="4" height="1.5" fill="#bebcc6"/><rect x="11" y="21" width="19" height="13" fill="#e4e3ee"/><rect x="30" y="21" width="4" height="13" fill="#7d7882"/></svg></div>
<div class="abs t" style="left:379px;top:328.2px;height:12px;line-height:12px;font-size:10px;color:#5580c4;">Deluxe Double</div>
<div class="abs t" style="left:601.5px;top:328.2px;height:12px;line-height:12px;font-size:10px;color:#545a62;">KES 6,500</div>
<div class="abs t" style="left:745.2px;top:327.6px;height:12px;line-height:12px;font-size:10px;color:#5580c4">0</div>
<div class="abs" style="left:744.8px;top:338.6px;width:6.5px;height:1.2px;background:repeating-linear-gradient(90deg,#a3b8d8 0 2.2px,transparent 2.2px 4.2px)"></div>
<div class="abs t" style="left:805px;top:328.2px;height:12px;line-height:12px;font-size:10px;color:#545a62;letter-spacing:.4px">2023-07-03</div>
<div class="abs t" style="left:912px;top:326.0px;width:51px;height:13.5px;line-height:16px;border-radius:4px;background:#2fb344;color:#f4fff5;font-size:8.2px;letter-spacing:.15px;font-weight:700;text-align:center">Published</div>
<div class="abs" style="left:1030px;top:323.4px;width:18.6px;height:18.6px;border-radius:3px;background:#2168c4"></div>
<svg class="i" style="left:1032.8px;top:326.3px;width:13px;height:13px;color:#e8f0fb;stroke-width:1.9" viewBox="0 0 24 24"><path d="M7 7h-1a2 2 0 0 0 -2 2v9a2 2 0 0 0 2 2h9a2 2 0 0 0 2 -2v-1"/><path d="M20.385 6.585a2.1 2.1 0 0 0 -2.97 -2.97l-8.415 8.385v3h3l8.415 -8.415z"/><path d="M16 5l3 3"/></svg>
<div class="abs" style="left:1052px;top:323.4px;width:18.6px;height:18.6px;border-radius:3px;background:#d63b3b"></div>
<svg class="i" style="left:1054.8px;top:326.3px;width:13px;height:13px;color:#fbe3e3;stroke-width:1.9" viewBox="0 0 24 24"><path d="M4 7l16 0"/><path d="M10 11l0 6"/><path d="M14 11l0 6"/><path d="M5 7l1 12a2 2 0 0 0 2 2h8a2 2 0 0 0 2 -2l1 -12"/><path d="M9 7v-3a1 1 0 0 1 1 -1h4a1 1 0 0 1 1 1v3"/></svg>
<div class="abs" style="left:246px;top:358px;width:875px;height:1px;background:#eceef1"></div>
<div class="abs" style="left:246px;top:359px;width:875px;height:50px;background:#fafbfc"></div>
<div class="abs" style="left:259px;top:377.0px;width:13.5px;height:13.5px;border:1px solid #e9ebee;border-radius:3px;background:#fafbfc"></div>
<div class="abs t" style="left:297.5px;top:379.2px;height:12px;line-height:12px;font-size:10px;color:#545a62;">6</div>
<div class="abs" style="left:328.3px;top:366.8px;width:34px;height:34px;filter:blur(.8px)"><svg width="34" height="34" viewBox="0 0 34 34" style="display:block"><rect width="34" height="34" fill="#9a97a5"/><rect width="34" height="6" fill="#c4c4d6"/><rect x="1" y="4" width="33" height="6.5" rx="3" fill="#e2e2ee"/><rect y="10.5" width="34" height="1.2" fill="#aaa6b3"/><rect x="1" y="11.5" width="33" height="5.5" rx="2.5" fill="#dedeea"/><rect y="17" width="34" height="4.5" fill="#877c7d"/><rect x="4" y="17.5" width="3" height="2" fill="#d4d4e0"/><rect x="0" y="4" width="2" height="17" fill="#9894a3"/><rect x="0" y="21.5" width="11" height="12.5" fill="#95929f"/><rect x="2" y="24" width="5" height="2" fill="#c8c6d0"/><rect x="2" y="28" width="4" height="1.5" fill="#bebcc6"/><rect x="11" y="21" width="19" height="13" fill="#e4e3ee"/><rect x="30" y="21" width="4" height="13" fill="#7d7882"/></svg></div>
<div class="abs t" style="left:379px;top:379.2px;height:12px;line-height:12px;font-size:10px;color:#5580c4;">Executive Single</div>
<div class="abs t" style="left:601.5px;top:379.2px;height:12px;line-height:12px;font-size:10px;color:#545a62;">KES 7,500</div>
<div class="abs t" style="left:745.2px;top:378.6px;height:12px;line-height:12px;font-size:10px;color:#5580c4">0</div>
<div class="abs" style="left:744.8px;top:389.6px;width:6.5px;height:1.2px;background:repeating-linear-gradient(90deg,#a3b8d8 0 2.2px,transparent 2.2px 4.2px)"></div>
<div class="abs t" style="left:805px;top:379.2px;height:12px;line-height:12px;font-size:10px;color:#545a62;letter-spacing:.4px">2023-07-03</div>
<div class="abs t" style="left:912px;top:377.0px;width:51px;height:13.5px;line-height:16px;border-radius:4px;background:#2fb344;color:#f4fff5;font-size:8.2px;letter-spacing:.15px;font-weight:700;text-align:center">Published</div>
<div class="abs" style="left:1030px;top:374.4px;width:18.6px;height:18.6px;border-radius:3px;background:#2168c4"></div>
<svg class="i" style="left:1032.8px;top:377.3px;width:13px;height:13px;color:#e8f0fb;stroke-width:1.9" viewBox="0 0 24 24"><path d="M7 7h-1a2 2 0 0 0 -2 2v9a2 2 0 0 0 2 2h9a2 2 0 0 0 2 -2v-1"/><path d="M20.385 6.585a2.1 2.1 0 0 0 -2.97 -2.97l-8.415 8.385v3h3l8.415 -8.415z"/><path d="M16 5l3 3"/></svg>
<div class="abs" style="left:1052px;top:374.4px;width:18.6px;height:18.6px;border-radius:3px;background:#d63b3b"></div>
<svg class="i" style="left:1054.8px;top:377.3px;width:13px;height:13px;color:#fbe3e3;stroke-width:1.9" viewBox="0 0 24 24"><path d="M4 7l16 0"/><path d="M10 11l0 6"/><path d="M14 11l0 6"/><path d="M5 7l1 12a2 2 0 0 0 2 2h8a2 2 0 0 0 2 -2l1 -12"/><path d="M9 7v-3a1 1 0 0 1 1 -1h4a1 1 0 0 1 1 1v3"/></svg>
<div class="abs" style="left:246px;top:409px;width:875px;height:1px;background:#eceef1"></div>
<div class="abs" style="left:246px;top:410px;width:875px;height:50px;background:#fff"></div>
<div class="abs" style="left:259px;top:428.0px;width:13.5px;height:13.5px;border:1px solid #e9ebee;border-radius:3px;background:#fff"></div>
<div class="abs t" style="left:297.5px;top:430.2px;height:12px;line-height:12px;font-size:10px;color:#545a62;">5</div>
<div class="abs" style="left:328.3px;top:417.8px;width:34px;height:34px;filter:blur(.8px)"><svg width="34" height="34" viewBox="0 0 34 34" style="display:block"><rect width="34" height="34" fill="#9a97a5"/><rect width="34" height="6" fill="#c4c4d6"/><rect x="1" y="4" width="33" height="6.5" rx="3" fill="#e2e2ee"/><rect y="10.5" width="34" height="1.2" fill="#aaa6b3"/><rect x="1" y="11.5" width="33" height="5.5" rx="2.5" fill="#dedeea"/><rect y="17" width="34" height="4.5" fill="#877c7d"/><rect x="4" y="17.5" width="3" height="2" fill="#d4d4e0"/><rect x="0" y="4" width="2" height="17" fill="#9894a3"/><rect x="0" y="21.5" width="11" height="12.5" fill="#95929f"/><rect x="2" y="24" width="5" height="2" fill="#c8c6d0"/><rect x="2" y="28" width="4" height="1.5" fill="#bebcc6"/><rect x="11" y="21" width="19" height="13" fill="#e4e3ee"/><rect x="30" y="21" width="4" height="13" fill="#7d7882"/></svg></div>
<div class="abs t" style="left:379px;top:430.2px;height:12px;line-height:12px;font-size:10px;color:#5580c4;">Executive Double</div>
<div class="abs t" style="left:601.5px;top:430.2px;height:12px;line-height:12px;font-size:10px;color:#545a62;">KES 8,500</div>
<div class="abs t" style="left:745.2px;top:429.6px;height:12px;line-height:12px;font-size:10px;color:#5580c4">0</div>
<div class="abs" style="left:744.8px;top:440.6px;width:6.5px;height:1.2px;background:repeating-linear-gradient(90deg,#a3b8d8 0 2.2px,transparent 2.2px 4.2px)"></div>
<div class="abs t" style="left:805px;top:430.2px;height:12px;line-height:12px;font-size:10px;color:#545a62;letter-spacing:.4px">2023-07-03</div>
<div class="abs t" style="left:912px;top:428.0px;width:51px;height:13.5px;line-height:16px;border-radius:4px;background:#2fb344;color:#f4fff5;font-size:8.2px;letter-spacing:.15px;font-weight:700;text-align:center">Published</div>
<div class="abs" style="left:1030px;top:425.4px;width:18.6px;height:18.6px;border-radius:3px;background:#2168c4"></div>
<svg class="i" style="left:1032.8px;top:428.3px;width:13px;height:13px;color:#e8f0fb;stroke-width:1.9" viewBox="0 0 24 24"><path d="M7 7h-1a2 2 0 0 0 -2 2v9a2 2 0 0 0 2 2h9a2 2 0 0 0 2 -2v-1"/><path d="M20.385 6.585a2.1 2.1 0 0 0 -2.97 -2.97l-8.415 8.385v3h3l8.415 -8.415z"/><path d="M16 5l3 3"/></svg>
<div class="abs" style="left:1052px;top:425.4px;width:18.6px;height:18.6px;border-radius:3px;background:#d63b3b"></div>
<svg class="i" style="left:1054.8px;top:428.3px;width:13px;height:13px;color:#fbe3e3;stroke-width:1.9" viewBox="0 0 24 24"><path d="M4 7l16 0"/><path d="M10 11l0 6"/><path d="M14 11l0 6"/><path d="M5 7l1 12a2 2 0 0 0 2 2h8a2 2 0 0 0 2 -2l1 -12"/><path d="M9 7v-3a1 1 0 0 1 1 -1h4a1 1 0 0 1 1 1v3"/></svg>
<div class="abs" style="left:246px;top:460px;width:875px;height:1px;background:#eceef1"></div>
<div class="abs" style="left:246px;top:461px;width:875px;height:50px;background:#fafbfc"></div>
<div class="abs" style="left:259px;top:479.0px;width:13.5px;height:13.5px;border:1px solid #e9ebee;border-radius:3px;background:#fafbfc"></div>
<div class="abs t" style="left:297.5px;top:481.2px;height:12px;line-height:12px;font-size:10px;color:#545a62;">4</div>
<div class="abs" style="left:328.3px;top:468.8px;width:34px;height:34px;filter:blur(.8px)"><svg width="34" height="34" viewBox="0 0 34 34" style="display:block"><rect width="34" height="34" fill="#9a97a5"/><rect width="34" height="6" fill="#c4c4d6"/><rect x="1" y="4" width="33" height="6.5" rx="3" fill="#e2e2ee"/><rect y="10.5" width="34" height="1.2" fill="#aaa6b3"/><rect x="1" y="11.5" width="33" height="5.5" rx="2.5" fill="#dedeea"/><rect y="17" width="34" height="4.5" fill="#877c7d"/><rect x="4" y="17.5" width="3" height="2" fill="#d4d4e0"/><rect x="0" y="4" width="2" height="17" fill="#9894a3"/><rect x="0" y="21.5" width="11" height="12.5" fill="#95929f"/><rect x="2" y="24" width="5" height="2" fill="#c8c6d0"/><rect x="2" y="28" width="4" height="1.5" fill="#bebcc6"/><rect x="11" y="21" width="19" height="13" fill="#e4e3ee"/><rect x="30" y="21" width="4" height="13" fill="#7d7882"/></svg></div>
<div class="abs t" style="left:379px;top:481.2px;height:12px;line-height:12px;font-size:10px;color:#5580c4;">Family Room Deluxe</div>
<div class="abs t" style="left:601.5px;top:481.2px;height:12px;line-height:12px;font-size:10px;color:#545a62;">KES 14,000</div>
<div class="abs t" style="left:745.2px;top:480.6px;height:12px;line-height:12px;font-size:10px;color:#5580c4">0</div>
<div class="abs" style="left:744.8px;top:491.6px;width:6.5px;height:1.2px;background:repeating-linear-gradient(90deg,#a3b8d8 0 2.2px,transparent 2.2px 4.2px)"></div>
<div class="abs t" style="left:805px;top:481.2px;height:12px;line-height:12px;font-size:10px;color:#545a62;letter-spacing:.4px">2023-07-03</div>
<div class="abs t" style="left:912px;top:479.0px;width:51px;height:13.5px;line-height:16px;border-radius:4px;background:#2fb344;color:#f4fff5;font-size:8.2px;letter-spacing:.15px;font-weight:700;text-align:center">Published</div>
<div class="abs" style="left:1030px;top:476.4px;width:18.6px;height:18.6px;border-radius:3px;background:#2168c4"></div>
<svg class="i" style="left:1032.8px;top:479.3px;width:13px;height:13px;color:#e8f0fb;stroke-width:1.9" viewBox="0 0 24 24"><path d="M7 7h-1a2 2 0 0 0 -2 2v9a2 2 0 0 0 2 2h9a2 2 0 0 0 2 -2v-1"/><path d="M20.385 6.585a2.1 2.1 0 0 0 -2.97 -2.97l-8.415 8.385v3h3l8.415 -8.415z"/><path d="M16 5l3 3"/></svg>
<div class="abs" style="left:1052px;top:476.4px;width:18.6px;height:18.6px;border-radius:3px;background:#d63b3b"></div>
<svg class="i" style="left:1054.8px;top:479.3px;width:13px;height:13px;color:#fbe3e3;stroke-width:1.9" viewBox="0 0 24 24"><path d="M4 7l16 0"/><path d="M10 11l0 6"/><path d="M14 11l0 6"/><path d="M5 7l1 12a2 2 0 0 0 2 2h8a2 2 0 0 0 2 -2l1 -12"/><path d="M9 7v-3a1 1 0 0 1 1 -1h4a1 1 0 0 1 1 1v3"/></svg>
<div class="abs" style="left:246px;top:511px;width:875px;height:1px;background:#eceef1"></div>
<div class="abs" style="left:246px;top:512px;width:875px;height:50px;background:#fff"></div>
<div class="abs" style="left:259px;top:530.0px;width:13.5px;height:13.5px;border:1px solid #e9ebee;border-radius:3px;background:#fff"></div>
<div class="abs t" style="left:297.5px;top:532.2px;height:12px;line-height:12px;font-size:10px;color:#545a62;">3</div>
<div class="abs" style="left:328.3px;top:519.8px;width:34px;height:34px;filter:blur(.8px)"><svg width="34" height="34" viewBox="0 0 34 34" style="display:block"><rect width="34" height="34" fill="#dcd5cb"/><rect width="34" height="10" fill="#e4ded6"/><circle cx="10" cy="4" r="2" fill="#fbf8f2"/><path d="M15 9 Q24 1 34 0 L34 1.6 Q25 3 16.5 10 Z" fill="#8f877f"/><rect x="1" y="12" width="10" height="7" fill="#8fb5c4"/><rect x="23" y="12.5" width="11" height="4.5" fill="#8a5238"/><rect x="18" y="12" width="5" height="9" fill="#cfc4b6"/><path d="M12 19 L34 17 L34 28 L12 25 Z" fill="#eeebf1"/><path d="M12 24.5 L34 27.5 L34 32.5 L15 29 Z" fill="#564a4d"/><rect x="5" y="19" width="6" height="3.5" fill="#7a5a45"/><path d="M0 23 L12 23 L15 29 L24 34 L0 34 Z" fill="#a8692e"/><path d="M3 27 L8 27 L10 34 L4 34 Z" fill="#c98a4e"/></svg></div>
<div class="abs t" style="left:379px;top:532.2px;height:12px;line-height:12px;font-size:10px;color:#5580c4;">Cottage</div>
<div class="abs t" style="left:601.5px;top:532.2px;height:12px;line-height:12px;font-size:10px;color:#545a62;">KES 12,000</div>
<div class="abs t" style="left:745.2px;top:531.6px;height:12px;line-height:12px;font-size:10px;color:#5580c4">0</div>
<div class="abs" style="left:744.8px;top:542.6px;width:6.5px;height:1.2px;background:repeating-linear-gradient(90deg,#a3b8d8 0 2.2px,transparent 2.2px 4.2px)"></div>
<div class="abs t" style="left:805px;top:532.2px;height:12px;line-height:12px;font-size:10px;color:#545a62;letter-spacing:.4px">2023-07-03</div>
<div class="abs t" style="left:912px;top:530.0px;width:51px;height:13.5px;line-height:16px;border-radius:4px;background:#2fb344;color:#f4fff5;font-size:8.2px;letter-spacing:.15px;font-weight:700;text-align:center">Published</div>
<div class="abs" style="left:1030px;top:527.4px;width:18.6px;height:18.6px;border-radius:3px;background:#2168c4"></div>
<svg class="i" style="left:1032.8px;top:530.3px;width:13px;height:13px;color:#e8f0fb;stroke-width:1.9" viewBox="0 0 24 24"><path d="M7 7h-1a2 2 0 0 0 -2 2v9a2 2 0 0 0 2 2h9a2 2 0 0 0 2 -2v-1"/><path d="M20.385 6.585a2.1 2.1 0 0 0 -2.97 -2.97l-8.415 8.385v3h3l8.415 -8.415z"/><path d="M16 5l3 3"/></svg>
<div class="abs" style="left:1052px;top:527.4px;width:18.6px;height:18.6px;border-radius:3px;background:#d63b3b"></div>
<svg class="i" style="left:1054.8px;top:530.3px;width:13px;height:13px;color:#fbe3e3;stroke-width:1.9" viewBox="0 0 24 24"><path d="M4 7l16 0"/><path d="M10 11l0 6"/><path d="M14 11l0 6"/><path d="M5 7l1 12a2 2 0 0 0 2 2h8a2 2 0 0 0 2 -2l1 -12"/><path d="M9 7v-3a1 1 0 0 1 1 -1h4a1 1 0 0 1 1 1v3"/></svg>
<div class="abs" style="left:246px;top:562px;width:875px;height:1px;background:#eceef1"></div>
<div class="abs" style="left:246px;top:563px;width:875px;height:36px;background:#f9fafb;border-radius:0 0 4px 4px"></div>
<svg class="i" style="left:258.5px;top:574.5px;width:14px;height:14px;color:#6e7681;stroke-width:1.7" viewBox="0 0 24 24"><path d="M3 12a9 9 0 1 0 18 0a9 9 0 0 0 -18 0"/><path d="M3.6 9h16.8"/><path d="M3.6 15h16.8"/><path d="M11.5 3a17 17 0 0 0 0 18"/><path d="M12.5 3a17 17 0 0 1 0 18"/></svg>
<div class="abs t" style="left:275.6px;top:575.6px;height:12px;line-height:12px;font-size:10px;color:#767e88;">Show from 1 to 7 in</div>
<div class="abs t" style="left:363.5px;top:574.8px;width:14px;height:12.5px;line-height:12.5px;border-radius:3px;background:#667489;color:#fff;font-size:9px;font-weight:700;text-align:center">7</div>
<div class="abs t" style="left:380.9px;top:575.6px;height:12px;line-height:12px;font-size:10px;color:#767e88;">records</div>
<div class="abs t" style="left:245px;top:810.60px;height:12.0px;line-height:12.0px;font-size:10px;font-weight:400;color:#8a9099;">Copyright 2026 © Kamel Park Hotel. Version <span style="color:#59606a">1.43.9.1</span></div>
<div class="abs t" style="right:78px;top:810px;height:12px;line-height:12px;font-size:10px;color:#8a9099">Page loaded in 0.37 seconds</div>
<svg class="abs" style="left:0;top:0;width:1200px;height:844px;pointer-events:none" viewBox="0 0 1200 844">
<g fill="#e45353" stroke="#e45353" stroke-width="2.5" stroke-linejoin="round">
 <path d="M1049 45 Q1049.5 38.5 1054 38.5 L1062 40.5 L1074 40.5 Q1079 42 1079 47 L1079 54.5 L1090 53.5 L1100 54.5 L1160 53.5 L1184 55 L1191 61.5 L1200 62 L1200 69 L1150 68.5 L1100 67.8 L1090 68.5 L1075 71 L1055 71.5 L1041 69.5 Q1037 67 1041 64 L1049 63 Z"/>
</g>
<g fill="none" stroke="#e45353" stroke-linecap="round" stroke-linejoin="round" stroke-width="4.4">
 <path d="M1052.5 71 L1051.5 88"/><path d="M1051.8 84 L1073 73" stroke-width="3"/>
</g>
<g fill="#e45353" stroke="#e45353" stroke-width="2.5" stroke-linejoin="round">
 <path d="M8 675 L30 673 L60 673 L63 670.5 L67 674.5 L98 676 Q104.5 681 99 686.5 L75 687 L70 688 L70 700 L90 700 Q96 705 91 711 L77 712 L77 742 L110 744 L136 748 Q147 755 145 764 L138 770.5 L55 772 L48 782 L38 780 L30 784.5 L22 782 L14 783 L13 725 L8 720 L2 718 L2 690 L6 685 Z"/>
</g>
<g fill="#1e2939">
 <path d="M24 698.5 L36 691 L43 692 L31 699.5 Z"/>
 <path d="M47 699.5 L56 691.5 L62 700 Z"/>
 <path d="M17 716 L27 714.5 L19 727 Z"/>
 <path d="M44 715.5 L50 715.5 L45 728 Z"/>
 <path d="M62.5 718 L66 719 L66.5 733 Z"/>
 <path d="M14 784 L20 774 L22 786 Z"/>
 <path d="M28 786 L34 772 L38 786 Z"/>
</g>
<g fill="none" stroke="#3a3440" stroke-linecap="round" stroke-width="1.1" opacity=".75">
 <path d="M58 738 L60 746"/><path d="M51 746 L53 752"/><path d="M36 728 L33 742"/><path d="M21 740 L19 756"/><path d="M70 724 L69 740"/>
 <path d="M30 681 L44 680"/><path d="M12 705 L30 704"/><path d="M40 760 L38 770"/>
</g>
<g fill="none" stroke="#b8424a" stroke-width="1.6" stroke-linecap="round">
 <path d="M103 754 L113 754"/><path d="M127 756 L134 758"/>
</g>
</svg>
</body></html>
